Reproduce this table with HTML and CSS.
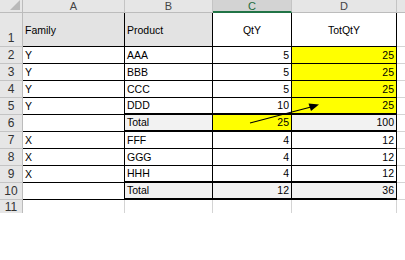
FILE: index.html
```html
<!DOCTYPE html>
<html>
<head>
<meta charset="utf-8">
<link rel="stylesheet" href="styles.css">
</head>
<body>
<div class="wrap">
  <div class="sheet">
    <div class="corner"><svg width="12" height="11" viewBox="0 0 12 11"><polygon points="11,0 11,10 1,10" fill="#b9b9b9"/></svg></div>
    <div class="ch">A</div>
    <div class="ch">B</div>
    <div class="ch sel">C</div>
    <div class="ch">D</div>
    <div class="ch end"></div>

    <div class="rh">1</div>
    <div class="c a hdr mid">Family</div>
    <div class="c b hdr mid">Product</div>
    <div class="c n mid center">QtY</div>
    <div class="c n mid center">TotQtY</div>
    <div class="g"></div>

    <div class="rh">2</div>
    <div class="c a">Y</div>
    <div class="c b">AAA</div>
    <div class="c n r">5</div>
    <div class="c n r yel">25</div>
    <div class="g"></div>

    <div class="rh">3</div>
    <div class="c a">Y</div>
    <div class="c b">BBB</div>
    <div class="c n r">5</div>
    <div class="c n r yel">25</div>
    <div class="g"></div>

    <div class="rh">4</div>
    <div class="c a">Y</div>
    <div class="c b">CCC</div>
    <div class="c n r">5</div>
    <div class="c n r yel">25</div>
    <div class="g"></div>

    <div class="rh">5</div>
    <div class="c a">Y</div>
    <div class="c b thick">DDD</div>
    <div class="c n r thick">10</div>
    <div class="c n r yel thick">25</div>
    <div class="g"></div>

    <div class="rh">6</div>
    <div class="c a"></div>
    <div class="c b tot thick">Total</div>
    <div class="c n r yel thick">25</div>
    <div class="c n r tot thick">100</div>
    <div class="g"></div>

    <div class="rh">7</div>
    <div class="c a">X</div>
    <div class="c b">FFF</div>
    <div class="c n r">4</div>
    <div class="c n r">12</div>
    <div class="g"></div>

    <div class="rh">8</div>
    <div class="c a">X</div>
    <div class="c b">GGG</div>
    <div class="c n r">4</div>
    <div class="c n r">12</div>
    <div class="g"></div>

    <div class="rh">9</div>
    <div class="c a">X</div>
    <div class="c b thick">HHH</div>
    <div class="c n r thick">4</div>
    <div class="c n r thick">12</div>
    <div class="g"></div>

    <div class="rh">10</div>
    <div class="c a"></div>
    <div class="c b tot thick">Total</div>
    <div class="c n r tot thick">12</div>
    <div class="c n r tot thick">36</div>
    <div class="g"></div>

    <div class="rh last">11</div>
    <div class="e"></div>
    <div class="e"></div>
    <div class="e"></div>
    <div class="e"></div>
    <div class="e noline"></div>

    <svg class="arrow" width="405" height="212" viewBox="0 0 405 212">
      <line x1="250" y1="123" x2="311" y2="107" stroke="#000" stroke-width="1.1"/>
      <polygon points="319,104.5 308.5,103.5 311,111" fill="#000"/>
    </svg>
  </div>
</div>
</body>
</html>
```

FILE: styles.css
```css
* { box-sizing: border-box; }
html, body { margin: 0; padding: 0; background: #fff; }
body {
  font-family: "Liberation Sans", Arial, sans-serif;
  font-size: 10.5px;
  color: #000;
}
.wrap { width: 405px; height: 260px; overflow: hidden; }
.sheet {
  position: relative;
  display: grid;
  grid-template-columns: 23px 102px 88px 79px 105px 8px;
  grid-template-rows: 13px 34px repeat(9, 17px) 13px;
  width: 405px;
}
.corner {
  background: #e6e6e6;
  border-right: 1px solid #bcbcbc;
  border-bottom: 1px solid #bcbcbc;
  display: flex;
  align-items: flex-start;
  justify-content: flex-end;
  padding-right: 1px;
}
.corner svg { display: block; }
.ch {
  background: #e6e6e6;
  border-right: 1px solid #c4c4c4;
  border-bottom: 1px solid #bcbcbc;
  color: #444;
  text-align: center;
  line-height: 12px;
  font-size: 11px;
}
.ch.sel {
  background: #d3d3d3;
  color: #1f6b3e;
  border-bottom: 2px solid #217346;
}
.ch.end { border-right: none; }
.rh {
  background: #e6e6e6;
  border-right: 1px solid #bcbcbc;
  border-bottom: 1px solid #c4c4c4;
  color: #333;
  font-size: 12px;
  display: flex;
  align-items: flex-end;
  justify-content: center;
  line-height: 13px;
  padding-bottom: 1px;
}
.rh.last { border-bottom: none; align-items: flex-start; padding-top: 1px; }
.c {
  border-right: 1px solid #000;
  border-bottom: 1px solid #000;
  display: flex;
  align-items: flex-end;
  padding: 0 2px 2px 2px;
  line-height: 12px;
  white-space: nowrap;
  background: #fff;
}
.c.r { justify-content: flex-end; padding-right: 2px; }
.c.mid { align-items: center; padding-bottom: 0; }
.c.center { justify-content: center; }
.c.hdr { background: #e3e3e3; }
.c.yel { background: #ffff00; }
.c.tot { background: #f2f2f2; }
.c.thick { border-bottom: 2px solid #000; }
.g {
  border-bottom: 1px solid #d4d4d4;
  background: #fff;
}
.e {
  border-right: 1px solid #d4d4d4;
  background: #fff;
}
.e.noline { border-right: none; }
.arrow {
  position: absolute;
  left: 0;
  top: 0;
  pointer-events: none;
}
```
